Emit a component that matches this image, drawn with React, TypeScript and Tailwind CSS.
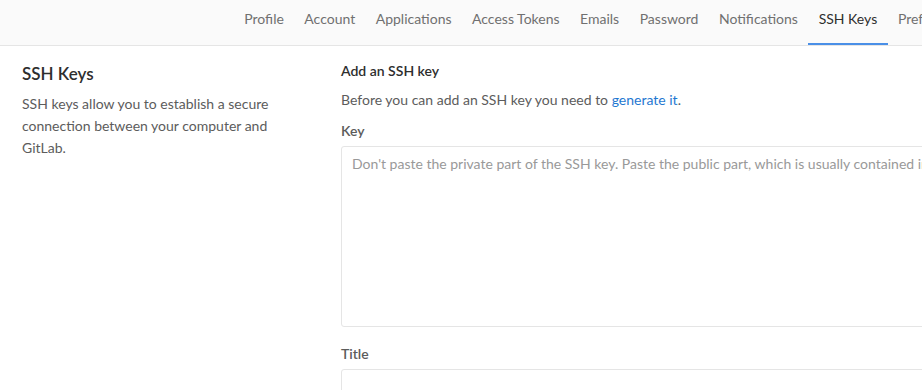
const tabs = [
  "Profile",
  "Account",
  "Applications",
  "Access Tokens",
  "Emails",
  "Password",
  "Notifications",
  "SSH Keys",
  "Preferences",
];

export default function App() {
  return (
    <div className="w-[922px] h-[390px] overflow-hidden bg-white font-['Lato','Liberation_Sans',sans-serif] text-[14px] text-[#2e2e2e]">
      {/* Settings tabs */}
      <nav className="h-[46px] bg-[#fafafa] border-b border-[#e5e5e5] pl-[234px] flex whitespace-nowrap">
        {tabs.map((tab) => {
          const active = tab === "SSH Keys";
          return (
            <a
              key={tab}
              className={
                active
                  ? "px-[10.5px] h-[45px] pt-[8px] text-[#2e2e2e] border-b-2 border-[#4a8fe7] shrink-0"
                  : "px-[10.25px] h-[45px] pt-[8px] text-[#707070] shrink-0"
              }
            >
              {tab}
            </a>
          );
        })}
      </nav>

      <div className="flex pt-[16px]">
        {/* Left side: description */}
        <div className="w-[341px] shrink-0 pl-[22px] pr-[40px]">
          <h4 className="text-[17px] font-semibold leading-[24px] text-[#2e2e2e]">
            SSH Keys
          </h4>
          <p className="mt-[7px] leading-[22px] text-[#5c5c5c]">
            SSH keys allow you to establish a secure
            <br />
            connection between your computer and
            <br />
            GitLab.
          </p>
        </div>

        {/* Right side: form */}
        <div className="w-[1000px] shrink-0">
          <h5 className="font-semibold leading-[20px] mt-[-1px]">Add an SSH key</h5>
          <p className="mt-[9px] leading-[20px] text-[#5c5c5c]">
            Before you can add an SSH key you need to{" "}
            <a className="text-[#1f78d1]">generate it</a>.
          </p>
          <label className="block mt-[11px] font-semibold leading-[20px] text-[#5c5c5c]">
            Key
          </label>
          <textarea
            className="block mt-[5px] w-[1000px] h-[181px] border border-[#e5e5e5] rounded-[3px] px-[10px] py-[7px] resize-none leading-[20px] placeholder-[#999999] outline-none"
            placeholder="Don't paste the private part of the SSH key. Paste the public part, which is usually contained in the file '~/.ssh/id_rsa.pub'."
          />
          <label className="block mt-[17px] font-semibold leading-[20px] text-[#5c5c5c]">
            Title
          </label>
          <input className="block mt-[5px] w-[1000px] h-[34px] border border-[#e5e5e5] rounded-[3px] px-[10px] outline-none" />
        </div>
      </div>
    </div>
  );
}
